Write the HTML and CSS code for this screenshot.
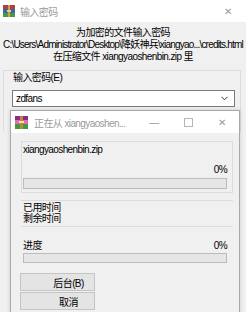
FILE: index.html
```html
<!DOCTYPE html>
<html lang="zh-CN">
<head>
  <meta charset="UTF-8">
  <title>输入密码</title>
  <link rel="stylesheet" href="styles.css">
</head>
<body>
  <div class="win">
    <div class="titlebar">
      <svg class="app-icon" width="12" height="12" viewBox="0 0 12 12">
        <rect x="0" y="0" width="12" height="4" fill="#b0403a"/>
        <rect x="0" y="4" width="12" height="4" fill="#3a62b5"/>
        <rect x="0" y="8" width="12" height="4" fill="#4a9a3c"/>
        <rect x="5" y="0" width="2" height="12" fill="#c9a24a"/>
        <rect x="4" y="5" width="4" height="2" fill="#e8d27a"/>
      </svg>
      <span class="title">输入密码</span>
      <span class="close">&#x2715;</span>
    </div>
    <div class="prompt">
      <div>为加密的文件输入密码</div>
      <div class="path">C:\Users\Administrator\Desktop\降妖神兵\xiangyao...\credits.html</div>
      <div>在压缩文件 xiangyaoshenbin.zip 里</div>
    </div>
    <div class="panel">
      <div class="label">输入密码(E)</div>
      <div class="combo">
        <span>zdfans</span>
        <svg width="7" height="5" viewBox="0 0 7 5"><path d="M0.5 0.8 L3.5 3.8 L6.5 0.8" fill="none" stroke="#333" stroke-width="1"/></svg>
      </div>
    </div>
  </div>

  <!-- progress dialog lies over the password window -->
  <div class="dlg">
    <div class="dlg-titlebar">
      <svg class="app-icon" width="13" height="13" viewBox="0 0 13 13">
        <rect x="0" y="0" width="13" height="4" fill="#8a2a8e"/>
        <rect x="0" y="4" width="13" height="4" fill="#e070a0"/>
        <rect x="0" y="8" width="13" height="5" fill="#3f9a3f"/>
        <rect x="5" y="0" width="3" height="13" fill="#b88a3a"/>
        <rect x="4" y="5" width="5" height="2" fill="#f2e6b0"/>
      </svg>
      <span class="title">正在从 xiangyaoshen...</span>
      <span class="cap">&#x2014;</span>
      <span class="cap"><span class="max"></span></span>
      <span class="cap">&#x2715;</span>
    </div>
    <div class="dlg-body">
      <div class="group">
        <div class="line">xiangyaoshenbin.zip</div>
        <div class="line right gap">0%</div>
        <div class="bar"></div>
      </div>
      <div class="stats">
        <div>已用时间</div>
        <div>剩余时间</div>
      </div>
      <div class="line row progress-row"><span>进度</span><span>0%</span></div>
      <div class="bar short"></div>
      <button class="btn first">后台(B)</button>
      <button class="btn">取消</button>
    </div>
  </div>
</body>
</html>
```

FILE: styles.css
```css
html, body {
  margin: 0;
  padding: 0;
}

body {
  width: 246px;
  height: 312px;
  overflow: hidden;
  position: relative;
  background: #f0f0f0;
  font-family: "Liberation Sans", "Noto Sans CJK SC", sans-serif;
  font-size: 10px;
  letter-spacing: -0.6px;
  color: #000;
}

.titlebar {
  height: 22px;
  background: #fff;
  display: flex;
  align-items: center;
  padding-left: 3px;
}

.app-icon {
  flex: none;
}

.title {
  margin-left: 5px;
  color: #9a9a9a;
  flex: 1;
}

.close {
  width: 30px;
  text-align: center;
  color: #9a9a9a;
  font-size: 10px;
  margin-right: 3px;
}

.prompt {
  padding-top: 5px;
  text-align: center;
  line-height: 12px;
  white-space: nowrap;
}

.path {
  letter-spacing: -0.8px;
}

.panel {
  margin: 7px 5px 0 3px;
  border: 1px solid #dcdcdc;
  border-bottom: none;
  height: 60px;
  padding: 1px 0 0 9px;
}

.label {
  line-height: 12px;
}

.combo {
  margin: 6px 5px 0 -1px;
  height: 15px;
  border: 1px solid #7a7a7a;
  background: #fff;
  display: flex;
  align-items: center;
  justify-content: space-between;
  padding: 0 6px 0 3px;
}

.dlg {
  position: absolute;
  left: 10px;
  top: 110px;
  width: 228px;
  height: 210px;
  border: 1px solid #a8a8a8;
  background: #f0f0f0;
  box-shadow: 0 0 4px rgba(0, 0, 0, 0.15);
}

.dlg-titlebar {
  height: 22px;
  background: #fff;
  display: flex;
  align-items: center;
  padding-left: 4px;
}

.dlg-titlebar .title {
  margin-left: 6px;
}

.cap {
  width: 34px;
  text-align: center;
  color: #9a9a9a;
  display: flex;
  justify-content: center;
  align-items: center;
}

.max {
  width: 7px;
  height: 7px;
  border: 1px solid #b5b5b5;
}

.dlg-body {
  padding: 8px 6px 0 10px;
  display: flex;
  flex-direction: column;
}

.group {
  border: 1px solid #dcdcdc;
  padding: 2px 5px 3px 1px;
}

.line {
  line-height: 12px;
}

.right {
  text-align: right;
}

.gap {
  margin-top: 8px;
}

.bar {
  margin-top: 2px;
  height: 9px;
  border: 1px solid #bcbcbc;
  background: #e6e6e6;
}

.stats {
  margin-top: 7px;
  border-top: 1px solid #dcdcdc;
  border-bottom: 1px solid #dcdcdc;
  padding: 1px 1px 2px 2px;
  line-height: 11px;
}

.row {
  display: flex;
  justify-content: space-between;
}

.progress-row {
  margin-top: 13px;
  padding: 0 6px 0 2px;
}

.bar.short {
  margin: 1px 6px 0 2px;
  height: 8px;
}

.btn {
  margin: 1px 0 0 -1px;
  width: 75px;
  height: 18px;
  padding: 0 0 0 22px;
  border: 1px solid #c4c4c4;
  background: #e4e4e4;
  font: inherit;
  letter-spacing: inherit;
  color: #000;
  text-align: center;
}

.btn.first {
  margin-top: 10px;
}
```
